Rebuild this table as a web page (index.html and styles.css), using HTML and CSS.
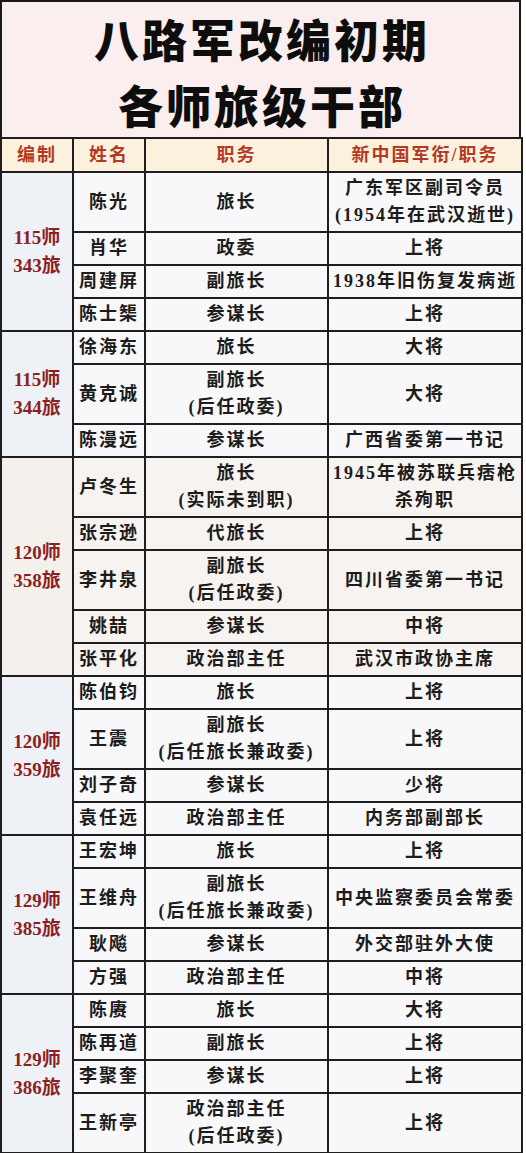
FILE: index.html
```html
<!DOCTYPE html>
<html lang="zh-CN">
<head>
<meta charset="utf-8">
<title>八路军改编初期各师旅级干部</title>
<link rel="stylesheet" href="styles.css">
</head>
<body>
<div class="sheet">
  <div class="title">
    <div class="t1">八路军改编初期</div>
    <div class="t2">各师旅级干部</div>
  </div>
  <table class="grid">
    <colgroup>
      <col class="c0"><col class="c1"><col class="c2"><col class="c3">
    </colgroup>
    <thead>
      <tr class="head"><th>编制</th><th>姓名</th><th>职务</th><th>新中国军衔/职务</th></tr>
    </thead>
    <tbody class="g g1">
      <tr class="r2"><td class="unit" rowspan="4">115师<br>343旅</td><td>陈光</td><td>旅长</td><td>广东军区副司令员<br>(1954年在武汉逝世)</td></tr>
      <tr class="r1"><td>肖华</td><td>政委</td><td>上将</td></tr>
      <tr class="r1"><td>周建屏</td><td>副旅长</td><td>1938年旧伤复发病逝</td></tr>
      <tr class="r1"><td>陈士榘</td><td>参谋长</td><td>上将</td></tr>
    </tbody>
    <tbody class="g g2">
      <tr class="r1"><td class="unit" rowspan="3">115师<br>344旅</td><td>徐海东</td><td>旅长</td><td>大将</td></tr>
      <tr class="r2"><td>黄克诚</td><td>副旅长<br>(后任政委)</td><td>大将</td></tr>
      <tr class="r1"><td>陈漫远</td><td>参谋长</td><td>广西省委第一书记</td></tr>
    </tbody>
    <tbody class="g g3">
      <tr class="r2"><td class="unit" rowspan="5">120师<br>358旅</td><td>卢冬生</td><td>旅长<br>(实际未到职)</td><td>1945年被苏联兵痞枪<br>杀殉职</td></tr>
      <tr class="r1"><td>张宗逊</td><td>代旅长</td><td>上将</td></tr>
      <tr class="r2"><td>李井泉</td><td>副旅长<br>(后任政委)</td><td>四川省委第一书记</td></tr>
      <tr class="r1"><td>姚喆</td><td>参谋长</td><td>中将</td></tr>
      <tr class="r1"><td>张平化</td><td>政治部主任</td><td>武汉市政协主席</td></tr>
    </tbody>
    <tbody class="g g4">
      <tr class="r1"><td class="unit" rowspan="4">120师<br>359旅</td><td>陈伯钧</td><td>旅长</td><td>上将</td></tr>
      <tr class="r2"><td>王震</td><td>副旅长<br>(后任旅长兼政委)</td><td>上将</td></tr>
      <tr class="r1"><td>刘子奇</td><td>参谋长</td><td>少将</td></tr>
      <tr class="r1"><td>袁任远</td><td>政治部主任</td><td>内务部副部长</td></tr>
    </tbody>
    <tbody class="g g5">
      <tr class="r1"><td class="unit" rowspan="4">129师<br>385旅</td><td>王宏坤</td><td>旅长</td><td>上将</td></tr>
      <tr class="r2"><td>王维舟</td><td>副旅长<br>(后任旅长兼政委)</td><td>中央监察委员会常委</td></tr>
      <tr class="r1"><td>耿飚</td><td>参谋长</td><td>外交部驻外大使</td></tr>
      <tr class="r1"><td>方强</td><td>政治部主任</td><td>中将</td></tr>
    </tbody>
    <tbody class="g g6">
      <tr class="r1"><td class="unit" rowspan="4">129师<br>386旅</td><td>陈赓</td><td>旅长</td><td>大将</td></tr>
      <tr class="r1"><td>陈再道</td><td>副旅长</td><td>上将</td></tr>
      <tr class="r1"><td>李聚奎</td><td>参谋长</td><td>上将</td></tr>
      <tr class="r2"><td>王新亭</td><td>政治部主任<br>(后任政委)</td><td>上将</td></tr>
    </tbody>
  </table>
</div>
</body>
</html>
```
FILE: styles.css
```css
html, body {
  margin: 0;
  padding: 0;
  background: #ffffff;
}
.sheet {
  width: 521px;
  font-family: "Liberation Serif", "Noto Sans CJK SC", serif;
  color: #1c1c1c;
}
.title {
  box-sizing: border-box;
  height: 137px;
  border: 2px solid #1a1a1a;
  border-bottom: none;
  background: #fbeeee;
  text-align: center;
  font-family: "Noto Sans CJK SC", sans-serif;
  font-weight: 900;
  font-size: 45px;
  letter-spacing: 3px;
  color: #0d0d0d;
  padding-top: 4px;
  padding-left: 3px;
}
.t1 { line-height: 66px; }
.t2 { line-height: 66px; }
.grid {
  width: 521px;
  table-layout: fixed;
  border-collapse: collapse;
}
.c0 { width: 72px; }
.c1 { width: 72px; }
.c2 { width: 183px; }
.c3 { width: 194px; }
.grid th, .grid td {
  border: 2px solid #1e1e1e;
  padding: 0;
  text-align: center;
  vertical-align: middle;
  font-weight: 700;
  font-size: 18px;
  letter-spacing: 2px;
  line-height: 27px;
  white-space: nowrap;
  background: #f8f8fa;
}
.head th {
  height: 32px;
  background: #fcf1dc;
  color: #b23a22;
  font-size: 18px;
}
.r1 td { height: 31px; }
.r2 td { height: 58px; }
.grid td.unit {
  background: #eef1f6;
  color: #8a1f24;
  font-size: 19px;
  letter-spacing: 0;
  line-height: 28px;
}
.g3 td { background: #f6f3f0; }
.g3 td.unit { background: #f4f0ec; }
```
